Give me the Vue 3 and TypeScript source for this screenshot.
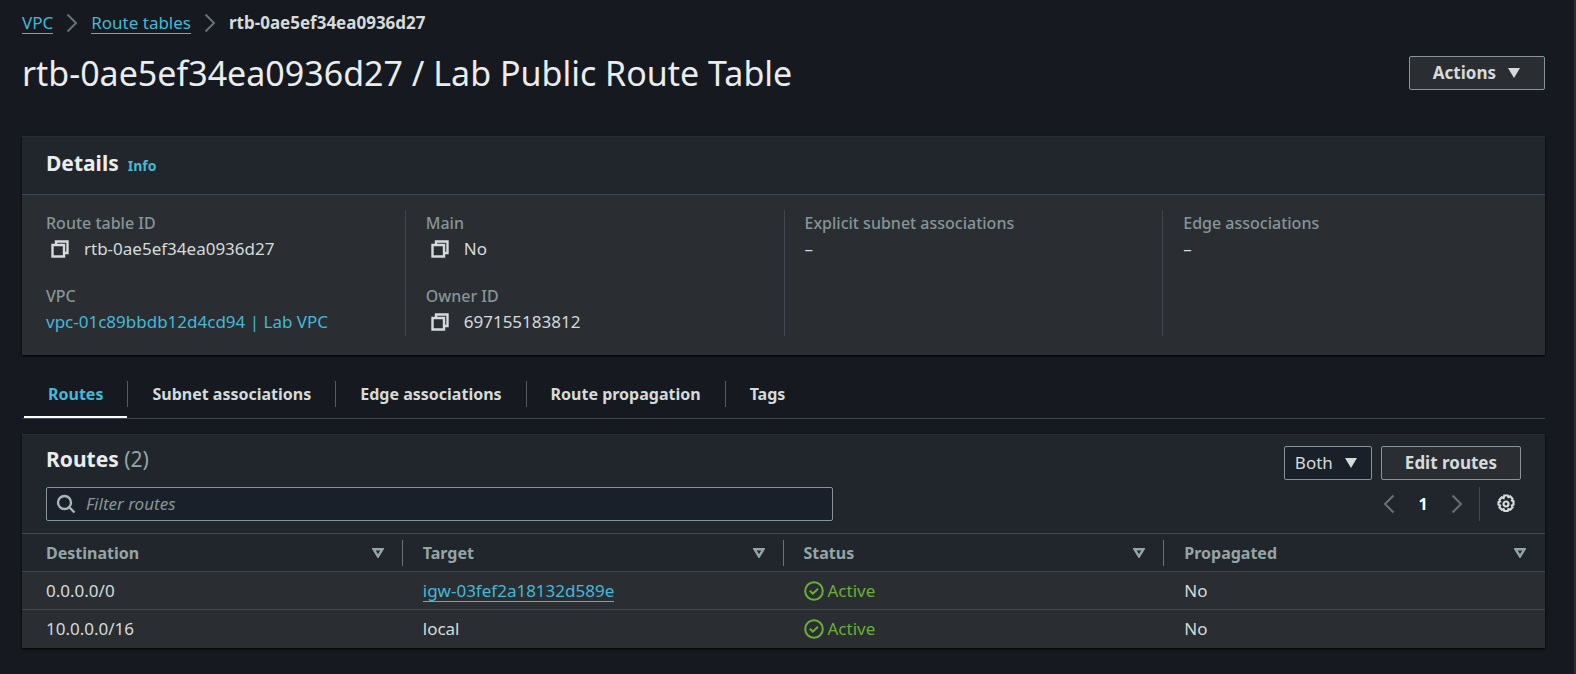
<script setup lang="ts">
import { computed, ref } from 'vue'

interface Field {
  label: string
  value: string
  copyable?: boolean
  href?: string
}

interface Route {
  destination: string
  target: string
  linked: boolean
  status: string
  propagated: string
}

const routeTableId = 'rtb-0ae5ef34ea0936d27'
const routeTableName = 'Lab Public Route Table'

const columns: Field[][] = [
  [
    { label: 'Route table ID', value: routeTableId, copyable: true },
    { label: 'VPC', value: 'vpc-01c89bbdb12d4cd94 | Lab VPC', href: '#vpc' },
  ],
  [
    { label: 'Main', value: 'No', copyable: true },
    { label: 'Owner ID', value: '697155183812', copyable: true },
  ],
  [{ label: 'Explicit subnet associations', value: '–' }],
  [{ label: 'Edge associations', value: '–' }],
]

const tabs = ['Routes', 'Subnet associations', 'Edge associations', 'Route propagation', 'Tags']
const activeTab = ref('Routes')

const headings = ['Destination', 'Target', 'Status', 'Propagated']
const routes: Route[] = [
  { destination: '0.0.0.0/0', target: 'igw-03fef2a18132d589e', linked: true, status: 'Active', propagated: 'No' },
  { destination: '10.0.0.0/16', target: 'local', linked: false, status: 'Active', propagated: 'No' },
]

const filter = ref('')
const scope = ref('Both')
const visibleRoutes = computed(() =>
  routes.filter((r) => `${r.destination} ${r.target}`.includes(filter.value.trim())),
)
</script>

<template>
  <main class="page">
    <nav class="breadcrumbs" aria-label="Breadcrumbs">
      <a href="#vpc-home" class="underlined">VPC</a>
      <svg class="chevron" viewBox="0 0 12 20" aria-hidden="true"><path d="M1.5 1.5 10 10l-8.500 8.500" /></svg>
      <a href="#route-tables" class="underlined">Route tables</a>
      <svg class="chevron" viewBox="0 0 12 20" aria-hidden="true"><path d="M1.5 1.5 10 10l-8.500 8.500" /></svg>
      <span class="current">{{ routeTableId }}</span>
    </nav>

    <header class="title-row">
      <h1>{{ routeTableId }} / {{ routeTableName }}</h1>
      <button type="button" class="button actions">
        Actions
        <svg class="caret" viewBox="0 0 14 12" aria-hidden="true"><path d="M1 1h12L7 11z" /></svg>
      </button>
    </header>

    <section class="panel details">
      <div class="details-head">
        <h2>Details</h2>
        <a href="#info" class="info">Info</a>
      </div>
      <div class="details-body">
        <dl v-for="(column, i) in columns" :key="i" class="column">
          <div v-for="field in column" :key="field.label" class="field">
            <dt>{{ field.label }}</dt>
            <dd>
              <button v-if="field.copyable" type="button" class="copy" :aria-label="`Copy ${field.label}`">
                <svg viewBox="0 0 18 18" aria-hidden="true">
                  <path d="M1.500 5h11.500v11.500h-11.500z" />
                  <path d="M5 5v-3.500h11.500v11.500h-3.500" />
                </svg>
              </button>
              <a v-if="field.href" :href="field.href">{{ field.value }}</a>
              <span v-else>{{ field.value }}</span>
            </dd>
          </div>
        </dl>
      </div>
    </section>

    <div class="tabs" role="tablist">
      <button
        v-for="tab in tabs"
        :key="tab"
        type="button"
        role="tab"
        class="tab"
        :class="{ active: tab === activeTab }"
        :aria-selected="tab === activeTab"
        @click="activeTab = tab"
      >
        <span>{{ tab }}</span>
      </button>
    </div>

    <section class="panel routes">
      <div class="routes-head">
        <h2>Routes <span class="count">({{ routes.length }})</span></h2>
        <div class="routes-actions">
          <div class="select">
            <select v-model="scope" aria-label="Route scope">
              <option>Both</option>
            </select>
            <svg class="caret" viewBox="0 0 14 12" aria-hidden="true"><path d="M1 1h12L7 11z" /></svg>
          </div>
          <button type="button" class="button edit">Edit routes</button>
        </div>
      </div>

      <div class="tools">
        <label class="filter">
          <svg viewBox="0 0 20 20" aria-hidden="true">
            <circle cx="8.500" cy="8.500" r="6.500" />
            <path d="M13 13l5.500 5.500" />
          </svg>
          <input v-model="filter" type="text" placeholder="Filter routes" aria-label="Filter routes" />
        </label>
        <div class="paging">
          <button type="button" class="icon-button" aria-label="Previous page">
            <svg class="chevron" viewBox="0 0 12 20" aria-hidden="true"><path d="M10.500 1.500 2 10l8.500 8.500" /></svg>
          </button>
          <span class="page-number">1</span>
          <button type="button" class="icon-button" aria-label="Next page">
            <svg class="chevron" viewBox="0 0 12 20" aria-hidden="true"><path d="M1.500 1.500 10 10l-8.500 8.500" /></svg>
          </button>
          <span class="rule"></span>
          <button type="button" class="icon-button" aria-label="Preferences">
            <svg class="gear" viewBox="0 0 20 20" aria-hidden="true">
              <path
                d="M8.300 1.500h3.400l.7 1.600 1.800-.7 2.300 2.400-.6 1.700 1.600.8v3.400l-1.600.9.700 1.700-2.400 2.500-1.800-.7-.7 1.900H8.300l-.7-1.900-1.800.7-2.400-2.500.7-1.700-1.600-.9V8.300l1.600-.8-.6-1.700 2.300-2.400 1.800.7z"
              />
              <circle cx="10" cy="10" r="2.500" />
            </svg>
          </button>
        </div>
      </div>

      <table>
        <thead>
          <tr>
            <th v-for="heading in headings" :key="heading" scope="col">
              <div class="heading">
                <span>{{ heading }}</span>
                <svg viewBox="0 0 12 10" aria-hidden="true"><path d="M1.500 1.200h9L6 8.500z" /></svg>
              </div>
            </th>
          </tr>
        </thead>
        <tbody>
          <tr v-for="route in visibleRoutes" :key="route.destination">
            <td>{{ route.destination }}</td>
            <td>
              <a v-if="route.linked" href="#gateway" class="underlined">{{ route.target }}</a>
              <template v-else>{{ route.target }}</template>
            </td>
            <td>
              <span class="status">
                <svg viewBox="0 0 20 20" aria-hidden="true">
                  <circle cx="10" cy="10" r="8.800" />
                  <path d="M5.800 9.700l3 3 5.200-5" />
                </svg>
                {{ route.status }}
              </span>
            </td>
            <td>{{ route.propagated }}</td>
          </tr>
        </tbody>
      </table>
    </section>
  </main>
</template>

<style>
body {
  margin: 0;
  background: #16191f;
}
</style>

<style scoped>
* {
  box-sizing: border-box;
}

.page {
  min-height: 100vh;
  padding: 10px 29px 26px 22px;
  border-right: 2px solid #2a2e33;
  background: #16191f;
  color: #d5dbdb;
  font-family: 'Noto Sans', 'Open Sans', sans-serif;
  font-size: 17px;
  line-height: 26px;
}

h1,
h2,
dl,
dd {
  margin: 0;
}

svg {
  display: block;
  flex: none;
  fill: none;
}

button,
input,
select {
  font: inherit;
  color: inherit;
}

button {
  padding: 0;
  border: 0;
  background: none;
  cursor: pointer;
}

a {
  color: #44b9d6;
  text-decoration: none;
}

.underlined {
  line-height: 20px;
  border-bottom: 1px solid #44b9d6;
}

td .underlined {
  display: inline-block;
}

.chevron {
  width: 12px;
  height: 20px;
  stroke: #687078;
  stroke-width: 2;
}

.caret {
  width: 14px;
  height: 12px;
  fill: #d5dbdb;
}

.breadcrumbs {
  display: flex;
  align-items: center;
  gap: 13px;
}

.current {
  font-weight: 700;
}

.title-row {
  display: flex;
  justify-content: space-between;
  align-items: center;
  padding-top: 14px;
}

h1 {
  color: #eaeded;
  font-size: 34px;
  font-weight: 400;
  line-height: 46px;
}

.button {
  height: 34px;
  padding: 0 23px 1px;
  border: 1px solid #879596;
  border-radius: 2px;
  background: #2a2e33;
  font-weight: 700;
}

.actions {
  display: flex;
  align-items: center;
  gap: 11px;
}

.panel {
  border-top: 1px solid #2a2e33;
  background: #21252c;
  box-shadow: 0 1px 2px #000000;
}

.details {
  margin-top: 40px;
}

.details-head {
  display: flex;
  align-items: baseline;
  gap: 9px;
  padding: 13px 24px 18px;
  border-bottom: 1px solid #414750;
}

h2 {
  color: #eaeded;
  font-size: 21px;
  font-weight: 700;
  line-height: 26px;
}

.info {
  font-size: 14px;
  font-weight: 700;
  line-height: 18px;
}

.details-body {
  display: grid;
  grid-template-columns: repeat(4, 1fr);
  padding: 15px 4px 19px;
  background: #2a2e33;
}

.column {
  display: flex;
  flex-direction: column;
  gap: 21px;
  padding: 0 20px 1px;
}

.column + .column {
  border-left: 1px solid #414750;
}

dt {
  color: #879596;
  font-size: 16px;
  font-weight: 500;
}

dd {
  display: flex;
  align-items: center;
}

.copy {
  margin: 0 15px 0 5px;
}

.copy svg {
  width: 18px;
  height: 18px;
  stroke: #d5dbdb;
  stroke-width: 2.4;
}

.tabs {
  display: flex;
  align-items: flex-end;
  margin-top: 26px;
  padding-left: 2px;
  border-bottom: 1px solid #414750;
}

.tab {
  padding-bottom: 9px;
  border-bottom: 2px solid transparent;
  font-size: 16px;
  font-weight: 700;
}

.tab span {
  display: block;
  padding: 0 24px;
}

.tab + .tab span {
  border-left: 1px solid #545b64;
}

.tab.active {
  border-bottom-color: #ffffff;
  color: #44b9d6;
}

.routes {
  margin-top: 15px;
}

.routes-head {
  display: flex;
  justify-content: space-between;
  align-items: flex-start;
  padding: 11px 24px 0;
}

.count {
  color: #95a5a6;
  font-weight: 400;
}

.routes-actions {
  display: flex;
  align-items: flex-start;
  gap: 9px;
}

.select {
  display: grid;
  align-items: center;
}

.select > * {
  grid-area: 1 / 1;
}

.select select {
  width: 88px;
  height: 34px;
  padding: 0 10px 1px;
  border: 1px solid #879596;
  border-radius: 2px;
  background: #1a2029;
  appearance: none;
}

.select .caret {
  justify-self: end;
  margin-right: 14px;
  pointer-events: none;
}

.tools {
  display: grid;
  grid-template-columns: 8fr 7fr;
  align-items: center;
  padding: 7px 24px 12px;
}

.filter {
  display: flex;
  align-items: center;
  gap: 10px;
  height: 34px;
  padding: 0 9px;
  border: 1px solid #879596;
  border-radius: 2px;
  background: #1a2029;
}

.filter svg {
  width: 20px;
  height: 20px;
  stroke: #aab7b8;
  stroke-width: 2.4;
}

.filter input {
  flex: 1;
  min-width: 0;
  padding: 0;
  border: 0;
  outline: 0;
  background: none;
}

.filter input::placeholder {
  color: #879596;
  font-style: italic;
  opacity: 1;
}

.paging {
  display: flex;
  justify-content: flex-end;
  align-items: center;
  padding-right: 5px;
}

.page-number {
  width: 56px;
  color: #ffffff;
  font-size: 16px;
  font-weight: 700;
  text-align: center;
}

.rule {
  width: 1px;
  height: 34px;
  margin: 0 16px;
  background: #414750;
}

.gear {
  width: 20px;
  height: 20px;
  stroke: #d5dbdb;
  stroke-width: 2.2;
}

table {
  width: 100%;
  border-collapse: collapse;
  table-layout: fixed;
  background: #2a2e33;
}

th,
td {
  height: 38px;
  padding: 0 20px;
  border-top: 1px solid #414750;
  text-align: left;
}

th:first-child,
td:first-child {
  padding-left: 24px;
}

th {
  padding: 0;
  background: #21252c;
  color: #95a5a6;
  font-size: 16px;
  font-weight: 700;
}

.heading {
  display: flex;
  justify-content: space-between;
  align-items: center;
  padding: 0 18px 0 20px;
  border-right: 1px solid #687078;
}

th:first-child .heading {
  padding-left: 0;
}

th:last-child .heading {
  border-right-color: transparent;
}

.heading svg {
  width: 12px;
  height: 10px;
  stroke: #95a5a6;
  stroke-width: 2.4;
}

.status {
  display: flex;
  align-items: center;
  gap: 4px;
  color: #6aaf35;
}

.status svg {
  width: 20px;
  height: 20px;
  stroke: #6aaf35;
  stroke-width: 2;
}
</style>
